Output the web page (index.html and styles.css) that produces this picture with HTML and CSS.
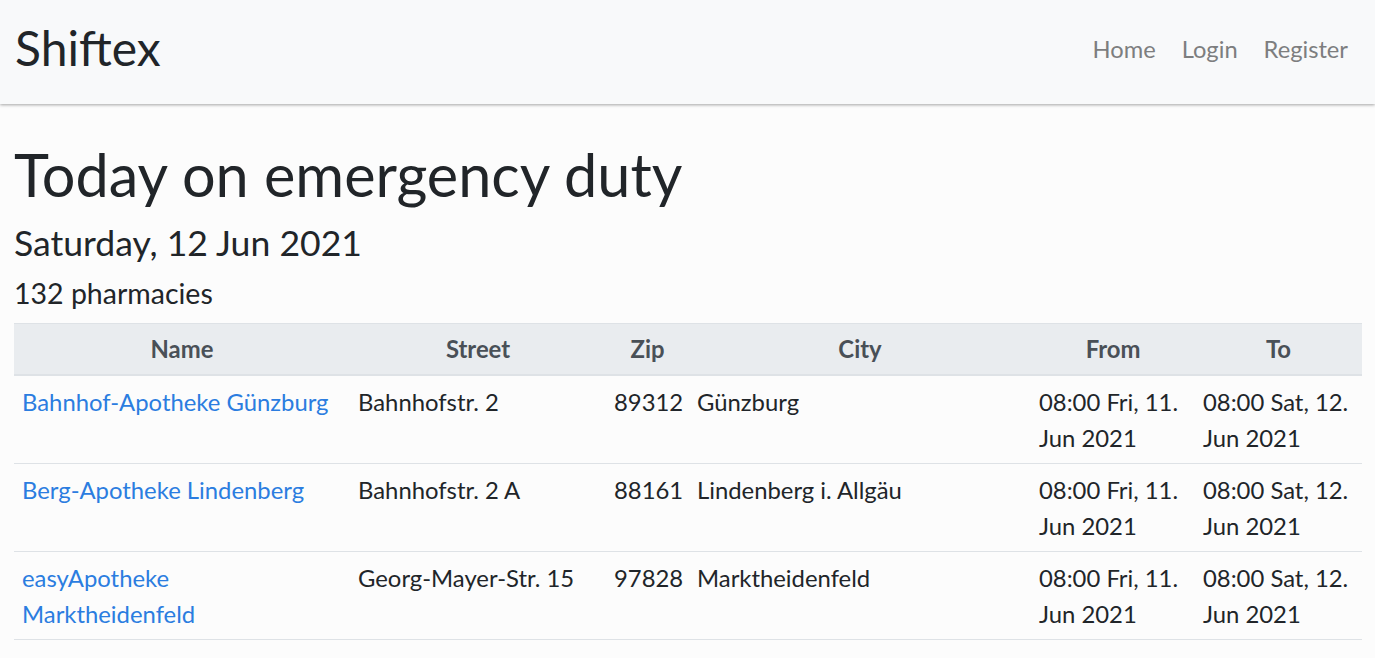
FILE: index.html
```html
<!DOCTYPE html>
<html lang="en">
<head>
<meta charset="utf-8">
<title>Shiftex</title>
<link rel="stylesheet" href="styles.css">
</head>
<body>
<nav class="navbar">
  <a class="brand" href="#">Shiftex</a>
  <ul class="nav">
    <li><a href="#">Home</a></li>
    <li><a href="#">Login</a></li>
    <li><a href="#">Register</a></li>
  </ul>
</nav>
<main class="container">
  <h1 class="title">Today on emergency duty</h1>
  <h4 class="date">Saturday, 12 Jun 2021</h4>
  <p class="count">132 pharmacies</p>
  <table class="table">
    <colgroup>
      <col class="c-name"><col class="c-street"><col class="c-zip"><col class="c-city"><col class="c-from"><col class="c-to">
    </colgroup>
    <thead>
      <tr><th>Name</th><th>Street</th><th>Zip</th><th>City</th><th>From</th><th>To</th></tr>
    </thead>
    <tbody>
      <tr>
        <td><a href="#">Bahnhof-Apotheke Günzburg</a></td>
        <td>Bahnhofstr. 2</td>
        <td class="zip">89312</td>
        <td>Günzburg</td>
        <td>08:00 Fri, 11. Jun 2021</td>
        <td>08:00 Sat, 12. Jun 2021</td>
      </tr>
      <tr>
        <td><a href="#">Berg-Apotheke Lindenberg</a></td>
        <td>Bahnhofstr. 2 A</td>
        <td class="zip">88161</td>
        <td>Lindenberg i. Allgäu</td>
        <td>08:00 Fri, 11. Jun 2021</td>
        <td>08:00 Sat, 12. Jun 2021</td>
      </tr>
      <tr>
        <td><a href="#">easyApotheke Marktheidenfeld</a></td>
        <td>Georg-Mayer-Str. 15</td>
        <td class="zip">97828</td>
        <td>Marktheidenfeld</td>
        <td>08:00 Fri, 11. Jun 2021</td>
        <td>08:00 Sat, 12. Jun 2021</td>
      </tr>
      <tr>
        <td>Marien-Apotheke</td>
        <td>Hauptstr. 110</td>
        <td class="zip">97204</td>
        <td>Frankenheim am Main</td>
        <td>08:00 Fri, 11. Jun 2021</td>
        <td>08:00 Sat, 12. Jun 2021</td>
      </tr>
    </tbody>
  </table>
</main>
</body>
</html>
```

FILE: styles.css
```css
* { box-sizing: border-box; }

html, body {
  margin: 0;
  padding: 0;
}

body {
  background: #fcfcfc;
  color: #212529;
  font-family: Lato, "Noto Sans", "Liberation Sans", sans-serif;
  font-size: 23.85px;
  line-height: 36px;
}

a {
  color: #2b7de0;
  text-decoration: none;
}

.navbar {
  display: flex;
  align-items: flex-start;
  justify-content: space-between;
  height: 104px;
  padding: 0 14px 0 15px;
  background: #f8f9fa;
  box-shadow: 0 1px 3px rgba(0, 0, 0, 0.35);
  position: relative;
}

.brand {
  color: #212529;
  font-size: 48px;
  line-height: 57.6px;
  margin-top: 19px;
}

.nav {
  display: flex;
  list-style: none;
  margin: 31px 0 0;
  padding: 0;
}

.nav a {
  display: block;
  padding: 0 13px;
  font-size: 23.7px;
  line-height: 36px;
  color: #7d7e7f;
}

.container {
  padding: 35px 13px 0 14px;
}

.title {
  margin: 0 0 12px;
  font-size: 59.4px;
  font-weight: 400;
  line-height: 1.2;
}

.date {
  margin: 0 0 11px;
  font-size: 35.6px;
  font-weight: 400;
  line-height: 1.2;
}

.count {
  margin: 0 0 13px;
  font-size: 28.5px;
  line-height: 1.2;
}

.table {
  width: 100%;
  border-collapse: collapse;
  table-layout: fixed;
}

.c-name { width: 336px; }
.c-street { width: 256px; }
.c-zip { width: 83px; }
.c-city { width: 342px; }
.c-from { width: 164px; }
.c-to { width: 167px; }

.table th,
.table td {
  padding: 7.5px 8px;
  border-top: 1px solid #dee2e6;
  vertical-align: top;
  text-align: left;
}

.table thead th {
  background: #e9ecef;
  color: #495057;
  font-weight: 700;
  text-align: center;
  border-bottom: 2px solid #dee2e6;
  padding: 7px 8px 7px;
}

.table td.zip {
  text-align: right;
  padding-right: 7px;
}
```
